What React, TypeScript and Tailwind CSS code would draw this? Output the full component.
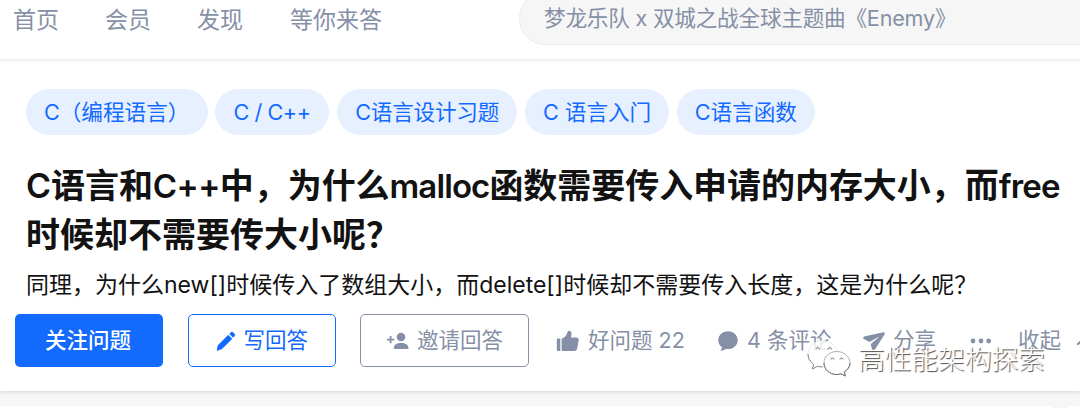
import React from "react";

const nav = [
  { label: "首页", cls: "w-[92px]" },
  { label: "会员", cls: "w-[92px]" },
  { label: "发现", cls: "w-[93px]" },
  { label: "等你来答", cls: "w-[229px]" },
];

const tags = [
  { label: "C（编程语言）", cls: "w-[181.6px]" },
  { label: "C / C++", cls: "w-[114px] tracking-[-0.4px]" },
  { label: "C语言设计习题", cls: "w-[180px] tracking-[-0.2px]" },
  { label: "C 语言入门", cls: "w-[144px]" },
  { label: "C语言函数", cls: "w-[138px]" },
];

function Pencil() {
  return (
    <svg className="h-[26px] w-[26px] shrink-0" viewBox="0 0 24 24" fill="currentColor">
      <path d="M4.076 16.966a4.19 4.19 0 0 1 1.05-1.76l8.568-8.569a.524.524 0 0 1 .741 0l2.928 2.927a.524.524 0 0 1 0 .742l-8.567 8.567a4.19 4.19 0 0 1-1.762 1.05l-3.04.974a.394.394 0 0 1-.475-.476zM19.9 5.3l-1.2-1.2a1.7 1.7 0 0 0-2.4 0l-.9.9a.6.6 0 0 0 0 .8l2.8 2.8a.6.6 0 0 0 .8 0l.9-.9a1.7 1.7 0 0 0 0-2.4z" />
    </svg>
  );
}

function PersonAdd() {
  return (
    <svg className="h-5 w-[22px] shrink-0" viewBox="0 0 22 20" fill="currentColor">
      <circle cx="14" cy="6" r="4.3" />
      <path d="M6.8 17.2c0-3.6 3-5.2 7.3-5.2s7.4 1.6 7.4 5.2c0 .5-.3.8-.8.8H7.6c-.5 0-.8-.3-.8-.8z" />
      <path d="M2.7 5h1.8v2.7h2.7v1.8H4.5v2.7H2.7V9.5H0V7.7h2.7z" />
    </svg>
  );
}

function Thumb() {
  return (
    <svg className="h-[22px] w-[23px] shrink-0" viewBox="0 0 23 22" fill="currentColor">
      <path d="M2 8.5h2.3V21H2a1.2 1.2 0 0 1-1.2-1.2V9.700A1.2 1.2 0 0 1 2 8.5z" />
      <path d="M5.600 8.800c2.900-.9 4.900-3.100 5.700-6.200.3-1.100.9-1.800 1.900-1.800 1.600 0 2.300 1.300 2.300 3.100 0 1.500-.3 2.400-.7 3.500h5.500c1.600 0 2.600 1.200 2.400 2.900l-1.500 8c-.3 1.700-1.400 2.700-3 2.700H7.300c-1 0-1.700-.5-1.700-1.500z" />
    </svg>
  );
}

function Comment() {
  return (
    <svg className="h-[26px] w-[26px] shrink-0" viewBox="0 0 24 24" fill="currentColor">
      <path d="M10.241 19.313a.97.97 0 0 0-.77.2 7.908 7.908 0 0 1-3.772 1.482.409.409 0 0 1-.38-.637 5.825 5.825 0 0 0 1.11-2.237.605.605 0 0 0-.227-.59A7.935 7.935 0 0 1 3 11.25C3 6.7 7.03 3 12 3s9 3.7 9 8.25-4.373 9.108-10.759 8.063z" />
    </svg>
  );
}

function Plane() {
  return (
    <svg className="h-[26px] w-[26px] shrink-0" viewBox="0 0 24 24" fill="currentColor">
      <path d="M2.931 7.89c-1.067.24-1.275 1.669-.318 2.207l5.277 2.908 8.168-4.776c.25-.127.477.198.273.39L9.05 14.66l.927 5.953c.18 1.084 1.593 1.376 2.182.456l9.644-15.242c.584-.892-.212-2.029-1.234-1.796L2.93 7.89z" />
    </svg>
  );
}

function Dots() {
  return (
    <svg className="h-[6px] w-[22px] shrink-0" viewBox="0 0 22 6" fill="currentColor">
      <circle cx="3" cy="3" r="2.4" />
      <circle cx="11" cy="3" r="2.4" />
      <circle cx="18.7" cy="3" r="2.4" />
    </svg>
  );
}

function ChatLogo() {
  return (
    <svg className="h-[42px] w-[48px] shrink-0" viewBox="0 0 48 42">
      <path
        d="M16.5 2.5C8.5 2.5 2 8.5 2 16c0 4.500 2.200 8 5.700 10.500L6.500 31l5-2.800c1.600.5 3.200.8 5 .8C24.500 29 31 23.500 31 16S24.500 2.500 16.500 2.500z"
        fill="#fff"
        fillOpacity="0.82"
        stroke="#ddd"
        strokeWidth="0.6"
      />
      <path
        d="M2 16c0 4.500 2.200 8 5.700 10.500L6.500 31l5-2.800c1.600.5 3.200.8 5 .8"
        fill="none"
        stroke="#888"
        strokeWidth="1"
      />
      <path
        d="M30.500 13.500C23.600 13.500 18 18.500 18 25s5.600 11.500 12.500 11.500c1.500 0 3-.2 4.400-.7l4.500 2.200-1.200-3.900C41.500 32 44 28.700 44 25c0-6.500-6.300-11.500-13.500-11.500z"
        fill="#fff"
        stroke="#999"
        strokeWidth="0.8"
      />
      <path
        d="M18 25c0 6.500 5.600 11.500 12.500 11.500 1.500 0 3-.2 4.400-.7l4.500 2.200-1.200-3.900C41.500 32 44 28.700 44 25"
        fill="none"
        stroke="#777"
        strokeWidth="1"
      />
      <g fill="none" stroke="#777" strokeWidth="1">
        <path d="M10 11.500a1.800 1.800 0 0 1 3.600 0M22 11.500a1.800 1.800 0 0 1 3.600 0M25 21.500a1.500 1.500 0 0 1 3 0M34 21.500a1.500 1.500 0 0 1 3 0" />
      </g>
    </svg>
  );
}

export default function App() {
  return (
    <div className="relative flex h-[408px] w-[1080px] flex-col overflow-hidden bg-[#f6f6f6] font-['Inter','Noto_Sans_CJK_SC',sans-serif] text-[#121212]">
      <header className="z-10 flex h-[59px] shrink-0 items-start bg-white pl-[13px] shadow-[0_1px_4px_rgba(18,18,18,0.12)]">
        <nav className="flex h-10 shrink-0 items-center whitespace-nowrap text-[23px] text-[#8590a6]">
          {nav.map((n) => (
            <a key={n.label} className={`${n.cls} shrink-0`}>
              {n.label}
            </a>
          ))}
        </nav>
        <div className="-mt-[8px] flex h-[53px] w-[620px] shrink-0 items-center rounded-full border border-[#ebebeb] bg-[#f6f6f6] pl-6 text-[21.6px] tracking-[-0.2px] whitespace-nowrap text-[#8590a6]">
          梦龙乐队 x 双城之战全球主题曲《Enemy》
        </div>
      </header>

      <main className="h-[332px] shrink-0 bg-white pt-[30px] shadow-[0_1px_4px_rgba(18,18,18,0.14)]">
        <div className="ml-[26px] flex gap-[7.8px]">
          {tags.map((t) => (
            <span
              key={t.label}
              className={`${t.cls} flex h-[46px] shrink-0 items-center rounded-full bg-[#e6f0ff] pt-px pl-[18px] text-[21.6px] whitespace-nowrap text-[#126aff]`}
            >
              {t.label}
            </span>
          ))}
        </div>
        <h1 className="mt-[26px] ml-[26px] text-[34px] leading-[49px] font-semibold whitespace-nowrap">
          <span className="block h-[49px] tracking-[-0.05px]">
            C语言和<span className="text-[33px] tracking-[-0.6px]">C++</span>中，为什么
            <span className="text-[33px] tracking-[-0.9px]">malloc</span>函数需要传入申请的内存大小，而
            <span className="text-[33px] tracking-[-0.8px]">free</span>
          </span>
          <span className="block h-[49px]">时候却不需要传大小呢？</span>
        </h1>
        <p className="mt-[9px] ml-[26px] h-[34px] text-[23px] leading-[34px] whitespace-nowrap">
          同理，为什么new[]时候传入了数组大小，而delete[]时候却不需要传入长度，这是为什么呢？
        </p>
        <div className="mt-[12px] ml-[15px] flex h-[53px] items-center text-[21.5px] whitespace-nowrap text-[#8590a6]">
          <button className="flex h-[53px] w-[148px] shrink-0 items-center justify-center rounded-[5px] bg-[#126aff] pr-[2px] font-medium text-white">
            关注问题
          </button>
          <button className="ml-[24.5px] flex h-[53px] w-[148px] shrink-0 items-center rounded-[5px] border-[1.5px] border-[#126aff] pl-[24px] text-[#126aff]">
            <Pencil />
            <span className="ml-[5px]">写回答</span>
          </button>
          <button className="ml-[24.5px] flex h-[53px] w-[169px] shrink-0 items-center rounded-[5px] border-[1.5px] border-[#8590a6] pl-[26px]">
            <PersonAdd />
            <span className="ml-[8px]">邀请回答</span>
          </button>
          <div className="ml-[27px] flex w-[159px] shrink-0 items-center">
            <Thumb />
            <span className="ml-[9px]">好问题 22</span>
          </div>
          <div className="flex w-[146px] shrink-0 items-center">
            <Comment />
            <span className="ml-[6px]">4 条评论</span>
          </div>
          <div className="flex w-[109px] shrink-0 items-center">
            <Plane />
            <span className="ml-[6px]">分享</span>
          </div>
          <div className="flex w-[48px] shrink-0 items-center">
            <Dots />
          </div>
          <div className="flex shrink-0 items-center">
            <span>收起</span>
            <svg className="ml-[14px] h-[14px] w-[18px] shrink-0" viewBox="0 0 18 14" fill="none" stroke="currentColor" strokeWidth="2.2" strokeLinecap="round">
              <path d="M3 10l7-6 7 6" />
            </svg>
          </div>
        </div>
      </main>
      <footer className="mt-[15px] flex h-[2px] shrink-0 gap-[15px]">
        <div className="w-[1052px] shrink-0 bg-white" />
        <div className="grow bg-white" />
      </footer>

      <div className="absolute top-[338px] left-[806px] z-20 flex items-center">
        <ChatLogo />
        <span className="ml-[4px] text-[26.7px] leading-[42px] font-light whitespace-nowrap text-white [text-shadow:1px_1px_1px_#444]">
          高性能架构探索
        </span>
      </div>
    </div>
  );
}
